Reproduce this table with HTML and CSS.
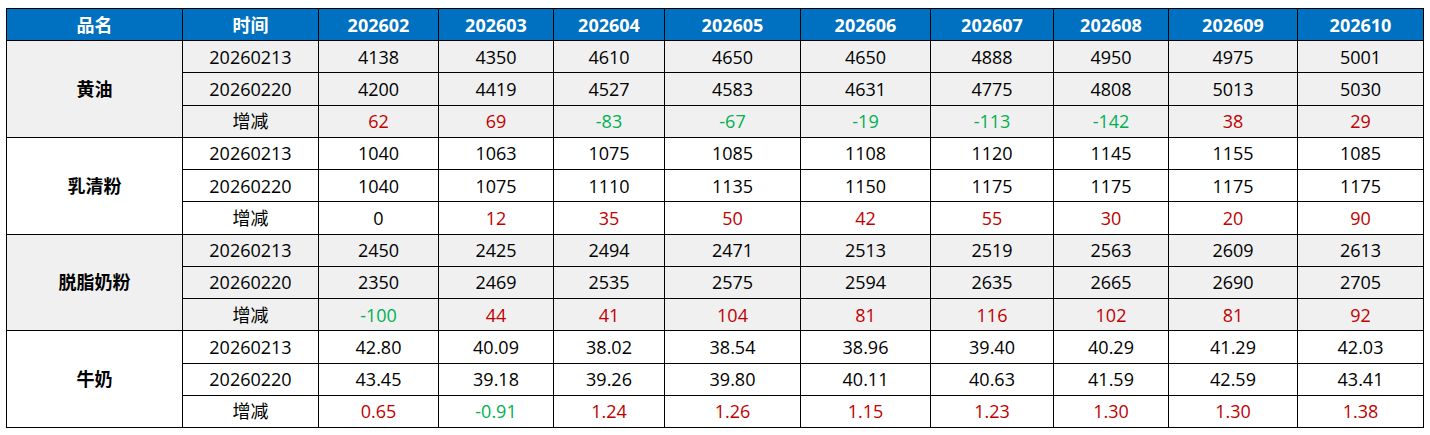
FILE: index.html
```html
<!DOCTYPE html>
<html lang="zh-CN">
<head>
<meta charset="utf-8">
<title>价格对比</title>
<link rel="stylesheet" href="styles.css">
</head>
<body>
<table class="grid">
  <colgroup>
    <col class="c-name"><col class="c-time">
    <col class="c1"><col class="c2"><col class="c3"><col class="c4"><col class="c5">
    <col class="c6"><col class="c7"><col class="c8"><col class="c9">
  </colgroup>
  <thead>
    <tr class="head">
      <th>品名</th><th>时间</th><th>202602</th><th>202603</th><th>202604</th><th>202605</th><th>202606</th><th>202607</th><th>202608</th><th>202609</th><th>202610</th>
    </tr>
  </thead>
  <tbody class="shade">
    <tr><td rowspan="3" class="name">黄油</td><td>20260213</td><td>4138</td><td>4350</td><td>4610</td><td>4650</td><td>4650</td><td>4888</td><td>4950</td><td>4975</td><td>5001</td></tr>
    <tr><td>20260220</td><td>4200</td><td>4419</td><td>4527</td><td>4583</td><td>4631</td><td>4775</td><td>4808</td><td>5013</td><td>5030</td></tr>
    <tr><td>增减</td><td class="up">62</td><td class="up">69</td><td class="down">-83</td><td class="down">-67</td><td class="down">-19</td><td class="down">-113</td><td class="down">-142</td><td class="up">38</td><td class="up">29</td></tr>
  </tbody>
  <tbody>
    <tr><td rowspan="3" class="name">乳清粉</td><td>20260213</td><td>1040</td><td>1063</td><td>1075</td><td>1085</td><td>1108</td><td>1120</td><td>1145</td><td>1155</td><td>1085</td></tr>
    <tr><td>20260220</td><td>1040</td><td>1075</td><td>1110</td><td>1135</td><td>1150</td><td>1175</td><td>1175</td><td>1175</td><td>1175</td></tr>
    <tr><td>增减</td><td>0</td><td class="up">12</td><td class="up">35</td><td class="up">50</td><td class="up">42</td><td class="up">55</td><td class="up">30</td><td class="up">20</td><td class="up">90</td></tr>
  </tbody>
  <tbody class="shade">
    <tr><td rowspan="3" class="name">脱脂奶粉</td><td>20260213</td><td>2450</td><td>2425</td><td>2494</td><td>2471</td><td>2513</td><td>2519</td><td>2563</td><td>2609</td><td>2613</td></tr>
    <tr><td>20260220</td><td>2350</td><td>2469</td><td>2535</td><td>2575</td><td>2594</td><td>2635</td><td>2665</td><td>2690</td><td>2705</td></tr>
    <tr><td>增减</td><td class="down">-100</td><td class="up">44</td><td class="up">41</td><td class="up">104</td><td class="up">81</td><td class="up">116</td><td class="up">102</td><td class="up">81</td><td class="up">92</td></tr>
  </tbody>
  <tbody>
    <tr><td rowspan="3" class="name">牛奶</td><td>20260213</td><td>42.80</td><td>40.09</td><td>38.02</td><td>38.54</td><td>38.96</td><td>39.40</td><td>40.29</td><td>41.29</td><td>42.03</td></tr>
    <tr><td>20260220</td><td>43.45</td><td>39.18</td><td>39.26</td><td>39.80</td><td>40.11</td><td>40.63</td><td>41.59</td><td>42.59</td><td>43.41</td></tr>
    <tr><td>增减</td><td class="up">0.65</td><td class="down">-0.91</td><td class="up">1.24</td><td class="up">1.26</td><td class="up">1.15</td><td class="up">1.23</td><td class="up">1.30</td><td class="up">1.30</td><td class="up">1.38</td></tr>
  </tbody>
</table>
</body>
</html>
```

FILE: styles.css
```css
html, body {
  margin: 0;
  padding: 0;
  background: #ffffff;
}

body {
  padding: 8px 0 0 6px;
  font-family: "Open Sans", "Noto Sans CJK SC", sans-serif;
  font-size: 18px;
  color: #000000;
}

.grid {
  border-collapse: collapse;
  table-layout: fixed;
  width: 1418px;
}

.c-name { width: 176px; }
.c-time { width: 136px; }
.c1 { width: 120px; }
.c2 { width: 115px; }
.c3 { width: 111px; }
.c4 { width: 136px; }
.c5 { width: 130px; }
.c6 { width: 123px; }
.c7 { width: 115px; }
.c8 { width: 129px; }
.c9 { width: 126px; }

.grid th,
.grid td {
  border: 1px solid #000000;
  padding: 0;
  text-align: center;
  vertical-align: middle;
  line-height: 20px;
  white-space: nowrap;
}

.head {
  height: 32px;
}

.head th {
  background: #0070c0;
  color: #ffffff;
  font-weight: 700;
}

tbody tr {
  height: 32.25px;
}

.shade td {
  background: #f0f0f0;
}

.name {
  font-weight: 700;
}

.up {
  color: #c00000;
}

.down {
  color: #00b050;
}
```
